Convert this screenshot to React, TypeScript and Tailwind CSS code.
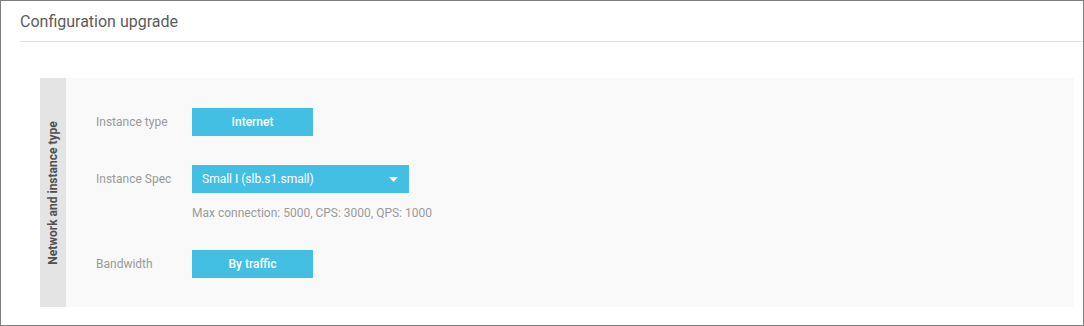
import type { ReactNode } from 'react';

function Label({ children }: { children: ReactNode }) {
  return <div className="w-[96px] shrink-0 text-[12px] text-[#9a9a9a]">{children}</div>;
}

function Pill({ children }: { children: ReactNode }) {
  return (
    <div className="w-[121px] h-[28px] flex items-center justify-center bg-[#43bfe3] text-white text-[12px] font-medium">
      {children}
    </div>
  );
}

export default function App() {
  return (
    <div className="w-[1084px] h-[326px] border border-[#7f7f7f] bg-white font-['Roboto',sans-serif] overflow-hidden">
      <div className="ml-[19px] h-[41px] pt-[1px] flex items-center border-b border-[#dfe4e8]">
        <h1 className="text-[16px] text-[#5c5c5c]">Configuration upgrade</h1>
      </div>

      <div className="mt-[36px] ml-[39px] w-[1034px] h-[229px] flex bg-[#f9f9f9]">
        <div className="w-[26px] shrink-0 bg-[#e4e4e4] flex items-center justify-center">
          <span className="-rotate-90 whitespace-nowrap text-[12px] font-bold text-[#505050]">
            Network and instance type
          </span>
        </div>

        <div className="pt-[30px] pl-[30px]">
          <div className="flex items-center h-[28px]">
            <Label>Instance type</Label>
            <Pill>Internet</Pill>
          </div>

          <div className="mt-[29px] flex items-center h-[28px]">
            <Label>Instance Spec</Label>
            <div className="w-[217px] h-[28px] flex items-center justify-between pl-[10px] pr-[11px] bg-[#43bfe3] text-white text-[12px]">
              <span>Small I (slb.s1.small)</span>
              <svg width="9" height="5" viewBox="0 0 9 5" className="fill-white">
                <path d="M0 0h9L4.5 5z" />
              </svg>
            </div>
          </div>
          <p className="mt-[12px] ml-[96px] text-[12px] leading-[16px] text-[#9a9a9a]">
            Max connection: 5000, CPS: 3000, QPS: 1000
          </p>

          <div className="mt-[29px] flex items-center h-[28px]">
            <Label>Bandwidth</Label>
            <Pill>By traffic</Pill>
          </div>
        </div>
      </div>
    </div>
  );
}
